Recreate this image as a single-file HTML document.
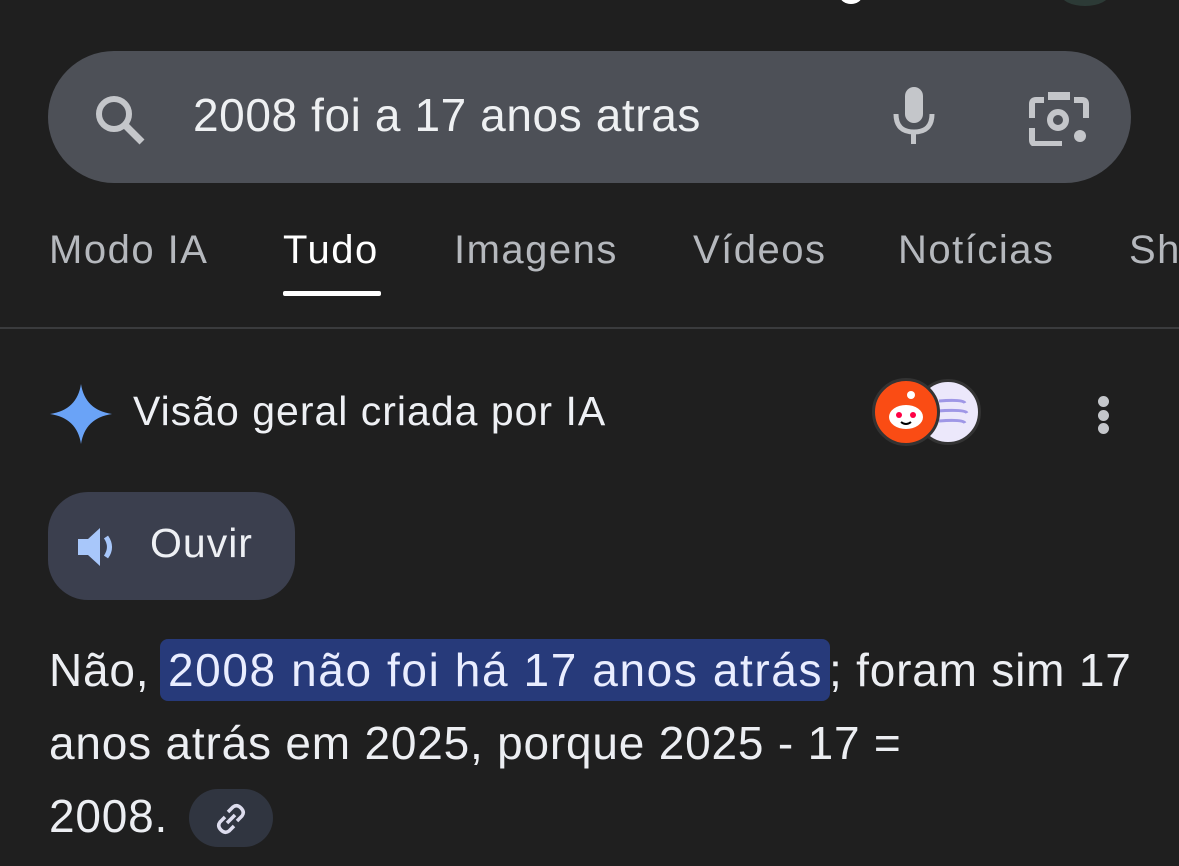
<!DOCTYPE html>
<html><head><meta charset="utf-8"><style>
body{margin:0;width:1179px;height:866px;background:#1f1f1f;overflow:hidden;font-family:"Liberation Sans",sans-serif;color:#e8eaed;position:relative}
.a{position:absolute;white-space:nowrap}
.search{left:48px;top:51px;width:1083px;height:132px;border-radius:66px;background:#4d5057}
.tab{top:228px;font-size:40px;color:#b5b8bd;letter-spacing:1.5px}
.body{font-size:46px;color:#eceef2;letter-spacing:0.8px}
</style></head><body>
<div class="a" style="left:840px;top:-12px;width:22px;height:16px;border-radius:50%;background:#fff"></div>
<div class="a" style="left:1060px;top:-20px;width:50px;height:26px;border-radius:50%;background:#2c3a36"></div>
<div class="a search"></div>
<svg class="a" style="left:88px;top:88px" width="60" height="60" viewBox="0 0 60 60"><circle cx="26" cy="26" r="15" fill="none" stroke="#c4c6ca" stroke-width="6"/><path d="M37 37 L54 54" stroke="#c4c6ca" stroke-width="7"/></svg>
<div class="a" style="left:193px;top:88px;font-size:46px;letter-spacing:0.6px;color:#eef0f2">2008 foi a 17 anos atras</div>
<svg class="a" style="left:890px;top:86px" width="50" height="60" viewBox="0 0 50 60"><rect x="15" y="1" width="18" height="36" rx="9" fill="#c4c6ca"/><path d="M6 28 Q6 46 24 46 Q42 46 42 28" fill="none" stroke="#c4c6ca" stroke-width="5"/><rect x="21" y="46" width="5" height="12" fill="#c4c6ca"/></svg>
<svg class="a" style="left:1028px;top:88px" width="62" height="58" viewBox="0 0 62 58"><path d="M16 12 H8 Q4 12 4 16 V30 M46 12 H54 Q58 12 58 16 V30 M4 40 V52 Q4 56 8 56 H34" fill="none" stroke="#c4c6ca" stroke-width="6"/><rect x="20" y="4" width="22" height="8" fill="#c4c6ca"/><circle cx="30" cy="32" r="8" fill="none" stroke="#c4c6ca" stroke-width="6"/><circle cx="52" cy="48" r="6" fill="#c4c6ca"/></svg>
<div class="a tab" style="left:49px">Modo IA</div>
<div class="a tab" style="left:283px;color:#fff">Tudo</div>
<div class="a" style="left:283px;top:291px;width:98px;height:5px;background:#fff;border-radius:2px"></div>
<div class="a tab" style="left:454px">Imagens</div>
<div class="a tab" style="left:693px">Vídeos</div>
<div class="a tab" style="left:898px">Notícias</div>
<div class="a tab" style="left:1129px">Sh</div>
<div class="a" style="left:0;top:327px;width:1179px;height:2px;background:#3a3b3d"></div>
<svg class="a" style="left:50px;top:384px" width="62" height="60" viewBox="0 0 62 60"><path d="M31 0 Q35 26 62 30 Q35 34 31 60 Q27 34 0 30 Q27 26 31 0Z" fill="#6aa3f7"/></svg>
<div class="a" style="left:133px;top:388px;font-size:41px;letter-spacing:1px;color:#eef0f4">Visão geral criada por IA</div>
<div class="a" style="left:915px;top:379px;width:60px;height:60px;border-radius:50%;background:#ece8fb;border:3px solid #333"></div>
<svg class="a" style="left:915px;top:379px" width="62" height="66"><path d="M24 22 Q48 20 50 24 M22 32 Q50 30 52 34 M24 42 Q48 40 50 44" stroke="#9f97e6" stroke-width="3" fill="none"/></svg>
<div class="a" style="left:872px;top:378px;width:62px;height:62px;border-radius:50%;background:#fa4c14;border:3px solid #333"></div>
<svg class="a" style="left:875px;top:381px" width="62" height="62"><ellipse cx="31" cy="36" rx="17" ry="12" fill="#fff"/><circle cx="36" cy="14" r="4" fill="#fff"/><circle cx="24" cy="34" r="3" fill="#f04"/><circle cx="38" cy="34" r="3" fill="#f04"/><path d="M26 41 Q31 45 36 41" stroke="#000" stroke-width="2" fill="none"/></svg>
<div class="a" style="left:1098px;top:396px;width:11px;height:11px;border-radius:50%;background:#c4c6ca"></div>
<div class="a" style="left:1098px;top:410px;width:11px;height:11px;border-radius:50%;background:#c4c6ca"></div>
<div class="a" style="left:1098px;top:423px;width:11px;height:11px;border-radius:50%;background:#c4c6ca"></div>
<div class="a" style="left:48px;top:492px;width:247px;height:108px;border-radius:40px;background:#3b3f4e"></div>
<svg class="a" style="left:76px;top:524px" width="46" height="46" viewBox="0 0 46 46"><path d="M2 15 H12 L24 4 V42 L12 31 H2Z" fill="#a8c7fa"/><path d="M30 13 Q37 23 30 33" stroke="#a8c7fa" stroke-width="5" fill="none"/></svg>
<div class="a" style="left:150px;top:520px;font-size:41px;letter-spacing:1px;color:#eef0f4">Ouvir</div>
<div class="a" style="left:160px;top:639px;width:670px;height:62px;border-radius:8px;background:#273a7a"></div>
<div class="a body" style="left:49px;top:643px">Não,</div>
<div class="a body" style="left:168px;top:643px;color:#e9edff;letter-spacing:1.6px">2008 não foi há 17 anos atrás</div>
<div class="a body" style="left:829px;top:643px">; foram sim 17</div>
<div class="a body" style="left:49px;top:716px">anos atrás em 2025, porque 2025 - 17 =</div>
<div class="a body" style="left:49px;top:789px">2008.</div>
<div class="a" style="left:189px;top:789px;width:84px;height:58px;border-radius:29px;background:#303540"></div>
<svg class="a" style="left:215px;top:803px" width="32" height="32" viewBox="0 0 32 32"><g fill="none" stroke="#dde" stroke-width="3.5"><path d="M13 9 L18 4 Q22 1 26 5 Q30 9 27 13 L22 18"/><path d="M19 23 L14 28 Q10 31 6 27 Q2 23 5 19 L10 14"/><path d="M12 20 L20 12"/></g></svg>
</body></html>
